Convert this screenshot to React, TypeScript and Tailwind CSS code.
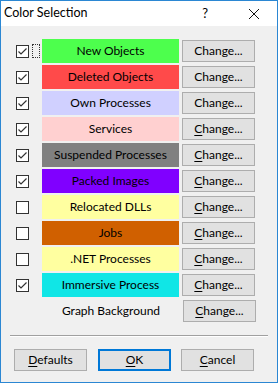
const rows = [
  { label: "New Objects", color: "bg-[#4dff4d]", checked: true, underline: false, focus: true },
  { label: "Deleted Objects", color: "bg-[#ff4a4a]", checked: true, underline: false },
  { label: "Own Processes", color: "bg-[#d0d0ff]", checked: true, underline: false },
  { label: "Services", color: "bg-[#ffd0d0]", checked: true, underline: true },
  { label: "Suspended Processes", color: "bg-[#808080]", checked: true, underline: true },
  { label: "Packed Images", color: "bg-[#8000ff]", checked: true, underline: true },
  { label: "Relocated DLLs", color: "bg-[#ffffa0]", checked: false, underline: true },
  { label: "Jobs", color: "bg-[#d06000]", checked: false, underline: true },
  { label: ".NET Processes", color: "bg-[#ffffa0]", checked: false, underline: true },
  { label: "Immersive Process", color: "bg-[#10e6e6]", checked: true, underline: true },
];

function Checkbox({ checked }: { checked: boolean }) {
  return (
    <div className="flex h-[13px] w-[13px] flex-shrink-0 items-center justify-center border border-[#333333] bg-white">
      {checked && (
        <svg width="11" height="11" viewBox="0 0 11 11">
          <polyline points="1.5,5.5 4,8 9.5,2.5" fill="none" stroke="#333333" strokeWidth="1.2" />
        </svg>
      )}
    </div>
  );
}

function Button({
  label,
  underline,
  primary = false,
}: {
  label: string;
  underline: boolean;
  primary?: boolean;
}) {
  return (
    <div
      className={`flex h-[22px] w-[73px] flex-shrink-0 items-center justify-center bg-[#e1e1e1] text-[12px] text-black ${
        primary ? "border-2 border-[#0078d7]" : "border border-[#adadad]"
      }`}
    >
      {underline ? <span className="underline underline-offset-2">{label[0]}</span> : label[0]}
      {label.slice(1)}
    </div>
  );
}

export default function App() {
  return (
    <div
      className="flex h-[383px] w-[278px] flex-col border border-[#2b87d3] bg-white"
      style={{ fontFamily: 'Lato, "Noto Sans", sans-serif' }}
    >
      <div className="flex h-[25px] flex-shrink-0 items-center bg-white text-[12.5px] text-black">
        <span className="ml-[3px]">Color Selection</span>
        <span className="ml-auto mr-[40px] text-[13px]">?</span>
        <svg width="12" height="12" viewBox="0 0 12 12" className="mr-[17px]">
          <path d="M1 1 L11 11 M11 1 L1 11" stroke="#111" strokeWidth="1" />
        </svg>
      </div>

      <div className="flex flex-1 flex-col bg-[#f0f0f0] pt-[12px]">
        {rows.map((row) => (
          <div key={row.label} className="flex h-[26px] items-center pl-[15px]">
            <Checkbox checked={row.checked} />
            <div className="flex w-[13px] flex-shrink-0">
              {row.focus && (
                <div className="ml-[3px] h-[14px] w-[8px] border border-dotted border-[#333333]" />
              )}
            </div>
            <div
              className={`flex h-[24px] w-[137px] flex-shrink-0 items-center justify-center text-[12px] text-black ${row.color}`}
            >
              {row.label}
            </div>
            <div className="ml-[3px]">
              <Button label="Change..." underline={row.underline} />
            </div>
          </div>
        ))}
        <div className="flex h-[26px] items-center pl-[41px]">
          <div className="flex w-[138px] justify-center text-[12px] text-black">Graph Background</div>
          <div className="ml-[3px]">
            <Button label="Change..." underline={true} />
          </div>
        </div>

        <div className="mx-[9px] mt-[11px] border-t border-b border-t-[#a0a0a0] border-b-white" />

        <div className="mt-[12px] flex pl-[13px]">
          <Button label="Defaults" underline={true} />
          <div className="ml-[11px]">
            <Button label="OK" underline={true} primary={true} />
          </div>
          <div className="ml-[10px]">
            <Button label="Cancel" underline={true} />
          </div>
        </div>
      </div>
    </div>
  );
}
